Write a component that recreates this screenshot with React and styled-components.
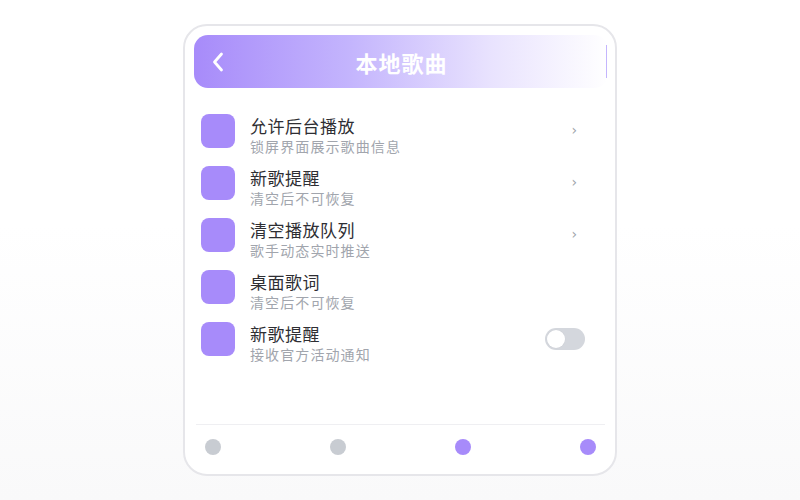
import React from "react";
import styled, { createGlobalStyle } from "styled-components";

const Global = createGlobalStyle`
  html, body { margin: 0; padding: 0; }
  body {
    width: 800px;
    height: 500px;
    background: linear-gradient(180deg, #ffffff 0%, #ffffff 45%, #f9f9fa 100%);
    font-family: "Noto Sans CJK SC", "Noto Sans", sans-serif;
  }
`;

const Page = styled.div`
  display: flex;
  justify-content: center;
  padding-top: 24px;
`;

const Card = styled.div`
  box-sizing: border-box;
  width: 434px;
  height: 452px;
  border: 2px solid #e6e6ea;
  border-radius: 24px;
  background: #ffffff;
  padding: 9px 7px 0 9px;
  display: flex;
  flex-direction: column;
`;

const Header = styled.div`
  height: 53px;
  border-radius: 14px;
  background: linear-gradient(90deg, #a78bfa 0%, #c4b5fd 38%, #e9e3fe 72%, #ffffff 100%);
  display: grid;
  grid-template-columns: 1fr auto 1fr;
  align-items: center;
  padding: 0 17px;
`;

const BackButton = styled.div`
  display: flex;
  align-items: center;
  justify-self: start;
`;

const Title = styled.div`
  color: #ffffff;
  font-size: 22px;
  font-weight: 700;
  letter-spacing: 1px;
  margin-left: 1px;
`;

const RightSlot = styled.div`
  justify-self: end;
  width: 1px;
  height: 33px;
  background: #c4b5fd;
  margin-right: -16px;
`;

const List = styled.div`
  display: flex;
  flex-direction: column;
  gap: 11px;
  margin-top: 26px;
  padding: 0 23px 0 7px;
`;

const Row = styled.div`
  display: flex;
  align-items: flex-start;
`;

const IconBox = styled.div`
  width: 34px;
  height: 34px;
  border-radius: 8px;
  background: #a78bfa;
  flex-shrink: 0;
`;

const TextCol = styled.div`
  flex: 1;
  margin-left: 15px;
  margin-top: 1px;
  display: flex;
  flex-direction: column;
`;

const RowTitle = styled.div`
  font-size: 17px;
  line-height: 22px;
  color: #2e2e33;
  letter-spacing: 0.5px;
`;

const RowSub = styled.div`
  font-size: 14px;
  line-height: 18px;
  color: #a1a5ad;
  letter-spacing: 1.1px;
`;

const Trail = styled.div`
  height: 34px;
  display: flex;
  align-items: center;
`;

const Chevron = styled.span`
  font-size: 14px;
  color: #a0a4ab;
  margin-right: 8px;
  margin-bottom: 2px;
  font-family: "DejaVu Sans", sans-serif;
`;

const Toggle = styled.div`
  box-sizing: border-box;
  width: 40px;
  height: 22px;
  border-radius: 11px;
  background: #d4d7dd;
  padding: 2px;
  display: flex;
  align-items: center;
`;

const Knob = styled.div`
  width: 18px;
  height: 18px;
  border-radius: 50%;
  background: #ffffff;
  box-shadow: 0 0 0 0.5px #cfd2d8;
`;

const Spacer = styled.div`
  flex: 1;
`;

const Footer = styled.div`
  margin: 0 3px 0 2px;
  border-top: 1px solid #efeff2;
  height: 49px;
  padding: 0 9px;
  display: flex;
  justify-content: space-between;
  align-items: center;
`;

const Dot = styled.div`
  width: 16px;
  height: 16px;
  border-radius: 50%;
  background: ${(p) => (p.$active ? "#a78bfa" : "#c8ccd2")};
  margin-bottom: 5px;
`;

const rows = [
  { title: "允许后台播放", sub: "锁屏界面展示歌曲信息", trail: "chevron" },
  { title: "新歌提醒", sub: "清空后不可恢复", trail: "chevron" },
  { title: "清空播放队列", sub: "歌手动态实时推送", trail: "chevron" },
  { title: "桌面歌词", sub: "清空后不可恢复", trail: null },
  { title: "新歌提醒", sub: "接收官方活动通知", trail: "toggle" },
];

export default function App() {
  return (
    <>
      <Global />
      <Page>
        <Card>
          <Header>
            <BackButton>
              <svg width="14" height="22" viewBox="0 0 14 22" fill="none">
                <path d="M10.5 3 L3.5 11 L10.5 19" stroke="#ffffff" strokeWidth="2.8" strokeLinecap="round" strokeLinejoin="round" />
              </svg>
            </BackButton>
            <Title>本地歌曲</Title>
            <RightSlot />
          </Header>
          <List>
            {rows.map((r, i) => (
              <Row key={i}>
                <IconBox />
                <TextCol>
                  <RowTitle>{r.title}</RowTitle>
                  <RowSub>{r.sub}</RowSub>
                </TextCol>
                <Trail>
                  {r.trail === "chevron" && <Chevron>›</Chevron>}
                  {r.trail === "toggle" && (
                    <Toggle>
                      <Knob />
                    </Toggle>
                  )}
                </Trail>
              </Row>
            ))}
          </List>
          <Spacer />
          <Footer>
            <Dot />
            <Dot />
            <Dot $active />
            <Dot $active />
          </Footer>
        </Card>
      </Page>
    </>
  );
}
